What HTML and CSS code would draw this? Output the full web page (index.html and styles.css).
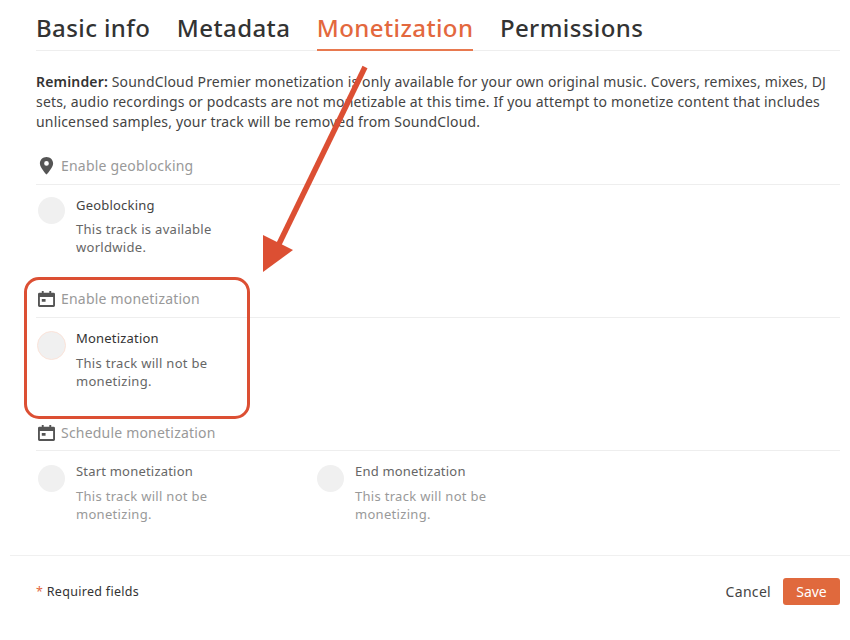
FILE: index.html
```html
<!DOCTYPE html>
<html lang="en">
<head>
<meta charset="utf-8">
<title>Monetization</title>
<link rel="stylesheet" href="styles.css">
</head>
<body>
<div class="page">
  <div class="content">
    <nav class="tabs">
      <a class="tab">Basic info</a>
      <a class="tab">Metadata</a>
      <a class="tab active">Monetization</a>
      <a class="tab">Permissions</a>
    </nav>
    <p class="reminder"><strong>Reminder:</strong> SoundCloud Premier monetization is only available for your own original music. Covers, remixes, mixes, DJ sets, audio recordings or podcasts are not monetizable at this time. If you attempt to monetize content that includes unlicensed samples, your track will be removed from SoundCloud.</p>

    <section class="section geo">
      <h3 class="section-head">
        <svg class="icon" viewBox="0 0 18 20"><path fill="#555" fill-rule="evenodd" d="M9 1C5.100 1 2 4 2 7.800 2 12.200 9 19.500 9 19.500s7-7.300 7-11.700C16 4 12.900 1 9 1zm0 4.300a2.500 2.500 0 1 1 0 5 2.500 2.500 0 0 1 0-5z"/></svg>
        <span>Enable geoblocking</span>
      </h3>
      <div class="fields">
        <div class="field">
          <span class="toggle"></span>
          <div class="field-text"><div class="field-title">Geoblocking</div><div class="field-desc">This track is available worldwide.</div></div>
        </div>
      </div>
    </section>

    <section class="section mon">
      <h3 class="section-head">
        <svg class="icon" viewBox="0 0 18 20"><path fill="#555" fill-rule="evenodd" d="M4 2h2v2h6V2h2v2h2.500A1.500 1.500 0 0 1 18 5.500v12a1.500 1.500 0 0 1-1.500 1.500h-15A1.500 1.500 0 0 1 0 17.500v-12A1.500 1.500 0 0 1 1.500 4H4zM2 8.500V17h14V8.500zm2 2h4v3H4z"/></svg>
        <span>Enable monetization</span>
      </h3>
      <div class="fields">
        <div class="field">
          <span class="toggle ringed"></span>
          <div class="field-text"><div class="field-title dark">Monetization</div><div class="field-desc">This track will not be monetizing.</div></div>
        </div>
      </div>
    </section>

    <section class="section sched">
      <h3 class="section-head">
        <svg class="icon" viewBox="0 0 18 20"><path fill="#555" fill-rule="evenodd" d="M4 2h2v2h6V2h2v2h2.500A1.500 1.500 0 0 1 18 5.500v12a1.500 1.500 0 0 1-1.500 1.500h-15A1.500 1.500 0 0 1 0 17.500v-12A1.500 1.500 0 0 1 1.500 4H4zM2 8.500V17h14V8.500zm2 2h4v3H4z"/></svg>
        <span>Schedule monetization</span>
      </h3>
      <div class="fields two">
        <div class="field muted">
          <span class="toggle"></span>
          <div class="field-text"><div class="field-title">Start monetization</div><div class="field-desc">This track will not be monetizing.</div></div>
        </div>
        <div class="field muted">
          <span class="toggle"></span>
          <div class="field-text"><div class="field-title">End monetization</div><div class="field-desc">This track will not be monetizing.</div></div>
        </div>
      </div>
    </section>
  </div>

  <footer class="footer">
    <div class="required"><span class="star">*</span> Required fields</div>
    <div class="actions">
      <button class="cancel" type="button">Cancel</button>
      <button class="save" type="button">Save</button>
    </div>
  </footer>

  <div class="callout-box"></div>
  <svg class="callout-arrow" viewBox="0 0 850 640" width="850" height="640">
    <line x1="365" y1="67" x2="279" y2="244" stroke="#dc4f33" stroke-width="5.500"/>
    <polygon points="263,235 293,250 263,272" fill="#dc4f33"/>
  </svg>
</div>
</body>
</html>
```
FILE: styles.css
```css
* { box-sizing: border-box; }
html, body { margin: 0; padding: 0; background: #fff; }
body {
  width: 850px;
  height: 640px;
  overflow: hidden;
  font-family: "Noto Sans", "Liberation Sans", sans-serif;
  color: #444;
}
.page { position: relative; width: 850px; height: 640px; display: flex; flex-direction: column; }
.content { padding: 0 10px 0 36px; flex: none; height: 555px; }

.tabs {
  display: flex;
  gap: 26.500px;
  height: 51px;
  border-bottom: 1px solid #eeeeee;
  padding-top: 10px;
}
.tab {
  font-size: 24px;
  line-height: 35px;
  height: 41px;
  font-weight: 500;
  color: #333;
  letter-spacing: 0.4px;
  white-space: nowrap;
}
.tab.active { color: #e3683e; border-bottom: 2px solid #e8794f; }

.reminder {
  margin: 21px 0 0;
  font-size: 14px;
  line-height: 20px;
  color: #444;
  width: 804px;
  letter-spacing: 0.17px;
}
.reminder strong { font-weight: 600; color: #333; }

.section-head {
  margin: 0;
  height: 34px;
  padding-bottom: 5px;
  border-bottom: 1px solid #eeeeee;
  display: flex;
  align-items: center;
  font-size: 14px;
  font-weight: 400;
  color: #999;
  letter-spacing: 0.2px;
}
.icon { width: 17px; height: 19px; margin: 0 6px 0 2px; flex: none; }
.geo { margin-top: 19px; height: 133px; }
.mon { height: 133px; }
.sched .section-head { padding-bottom: 3px; }

.fields { display: grid; grid-template-columns: 279px; padding: 11px 0 0 2px; }
.fields.two { grid-template-columns: 279px 240px; }
.field { display: flex; gap: 11px; }
.toggle {
  width: 27px;
  height: 27px;
  margin-top: 1px;
  border-radius: 50%;
  background: #f0f0f0;
  flex: none;
}
.toggle.ringed { width: 29px; height: 29px; margin: 2px -1px 0 -1px; border: 1px solid #fbe3d9; }
.sched .toggle { margin-top: 3px; }
.field-text { width: 150px; }
.field-title { font-size: 13px; line-height: 18px; color: #444; letter-spacing: 0.2px; }
.field-title.dark { color: #333; }
.field-desc { margin-top: 6px; font-size: 13px; line-height: 18px; color: #666; letter-spacing: 0.3px; }
.mon .field-desc, .sched .field-desc { margin-top: 7px; }
.muted .field-title { color: #666; }
.muted .field-desc { color: #999; }

.footer {
  margin-left: 10px;
  border-top: 1px solid #f0f0f0;
  padding: 22px 10px 0 26px;
  display: flex;
  justify-content: space-between;
  align-items: flex-start;
}
.required { font-size: 12.500px; line-height: 27px; color: #333; letter-spacing: 0.3px; }
.star { color: #e3683e; }
.actions { display: flex; align-items: center; gap: 12px; }
.cancel {
  border: 0; background: none; padding: 0;
  font: inherit; font-size: 14px; color: #444;
  letter-spacing: 0.3px;
}
.save {
  width: 57px; height: 27px;
  border: 0; border-radius: 3px;
  background: #e0693d; color: #fff;
  font: inherit; font-size: 14px;
  padding: 0;
}

.callout-box {
  position: absolute;
  left: 24px; top: 277px;
  width: 226px; height: 142px;
  border: 3px solid #dc4f33;
  border-radius: 15px;
}
.callout-arrow { position: absolute; left: 0; top: 0; pointer-events: none; }
```
